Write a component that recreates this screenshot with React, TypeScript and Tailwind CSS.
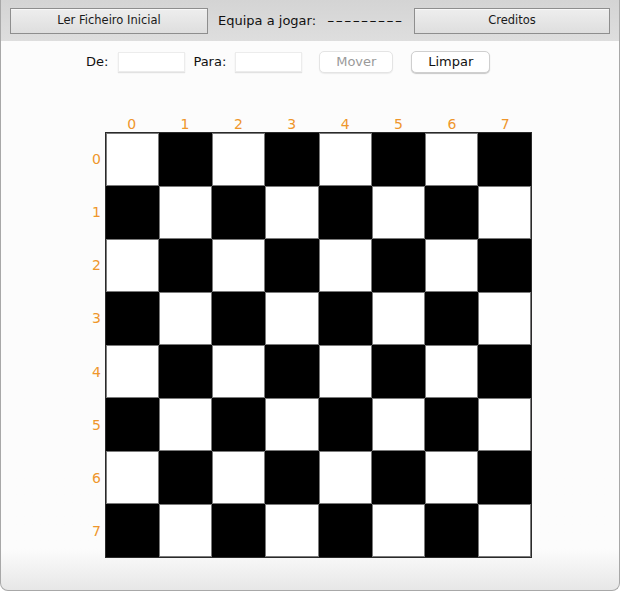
const ROWS = [0, 1, 2, 3, 4, 5, 6, 7];

function Square({ row, col }: { row: number; col: number }) {
  const dark = (row + col) % 2 === 1;
  return dark ? (
    <div className="bg-black" />
  ) : (
    <div className="bg-white border border-[#7a7a7a]" />
  );
}

function TopButton({ label }: { label: string }) {
  return (
    <button className="h-[26px] border border-[#8e8e8e] bg-gradient-to-b from-[#eeeeee] to-[#dedede] shadow-[inset_0_1px_0_#f8f8f8] text-[11.5px] text-[#1a1a1a]">
      {label}
    </button>
  );
}

export default function App() {
  return (
    <div className="w-[620px] h-[591px] flex flex-col overflow-hidden rounded-b-[8px] border-x border-b border-[#a8a8a8] bg-gradient-to-b from-[#fcfcfc] from-93% to-[#e7e7e7] font-['DejaVu_Sans',sans-serif]">
      {/* barra de topo */}
      <div className="h-[41px] shrink-0 bg-gradient-to-b from-[#d4d4d4] to-[#dedede] grid grid-cols-[198px_206px_196px] items-center pl-[9px] pr-[9px]">
        <TopButton label="Ler Ficheiro Inicial" />
        <div className="flex items-center pl-[10px] text-[13px] text-[#111]">
          <span>Equipa a jogar:</span>
          <span className="ml-[11px] inline-block origin-left scale-x-[1.6] tracking-[0.6px]">---------</span>
        </div>
        <TopButton label="Creditos" />
      </div>

      {/* jogada */}
      <div className="mt-[10px] h-[22px] flex items-center text-[13px] text-[#111]">
        <span className="ml-[85px]">De:</span>
        <input className="ml-[10px] w-[67px] h-[20px] bg-white border border-[#ececec] shadow-[0_1px_1px_#e2e2e2] outline-none" />
        <span className="ml-[8px]">Para:</span>
        <input className="ml-[9px] w-[67px] h-[20px] bg-white border border-[#ececec] shadow-[0_1px_1px_#e2e2e2] outline-none" />
        <button
          disabled
          className="ml-[17px] w-[74px] h-[22px] rounded-[5px] bg-white border border-[#e4e4e4] shadow-[0_1px_1px_#ececec] text-[#9a9a9a]"
        >
          Mover
        </button>
        <button className="ml-[18px] w-[79px] h-[22px] rounded-[5px] bg-white border border-[#cfcfcf] shadow-[0_1px_1px_#c8c8c8] text-[#111]">
          Limpar
        </button>
      </div>

      {/* tabuleiro */}
      <div className="mt-[43px] ml-[87px] grid grid-cols-[17px_427px] grid-rows-[16px_426px] text-[14px] leading-[16px] text-[#ef962b]">
        <div />
        <div className="grid grid-cols-8 text-center">
          {ROWS.map((c) => (
            <span key={c}>{c}</span>
          ))}
        </div>
        <div className="grid grid-rows-8 items-center text-center">
          {ROWS.map((r) => (
            <span key={r}>{r}</span>
          ))}
        </div>
        <div className="grid grid-cols-8 grid-rows-8 border border-[#2a2a2a] bg-white">
          {ROWS.map((r) => ROWS.map((c) => <Square key={`${r}-${c}`} row={r} col={c} />))}
        </div>
      </div>
    </div>
  );
}
